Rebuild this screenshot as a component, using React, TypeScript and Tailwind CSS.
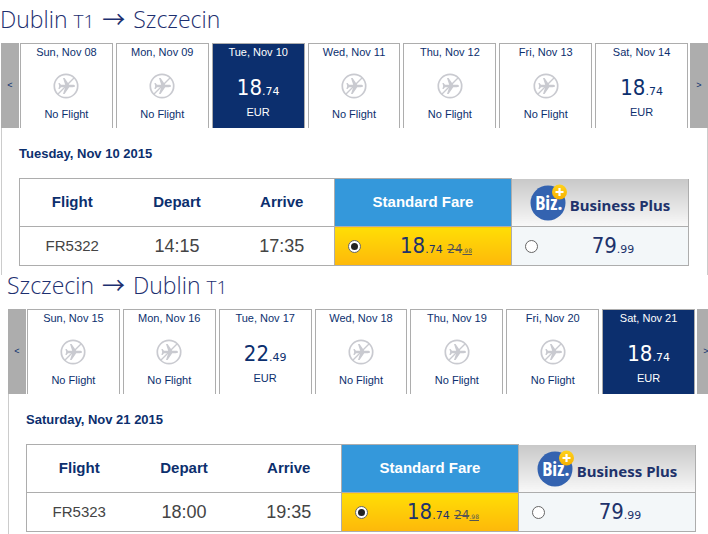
import React, { useState } from 'react'
import { clsx } from 'clsx'

interface Price {
  whole: string
  cents: string
}

interface Day {
  label: string
  price?: Price
}

interface Flight {
  id: string
  from: React.ReactNode
  to: React.ReactNode
  days: Day[]
  selected: number
  date: string
  number: string
  depart: string
  arrive: string
}

const terminal = <span className="text-[19px]">T1</span>

const outbound: Flight = {
  id: 'outbound',
  from: <>Dublin {terminal}</>,
  to: 'Szczecin',
  days: [
    { label: 'Sun, Nov 08' },
    { label: 'Mon, Nov 09' },
    { label: 'Tue, Nov 10', price: { whole: '18', cents: '74' } },
    { label: 'Wed, Nov 11' },
    { label: 'Thu, Nov 12' },
    { label: 'Fri, Nov 13' },
    { label: 'Sat, Nov 14', price: { whole: '18', cents: '74' } },
  ],
  selected: 2,
  date: 'Tuesday, Nov 10 2015',
  number: 'FR5322',
  depart: '14:15',
  arrive: '17:35',
}

const inbound: Flight = {
  id: 'inbound',
  from: 'Szczecin',
  to: <>Dublin {terminal}</>,
  days: [
    { label: 'Sun, Nov 15' },
    { label: 'Mon, Nov 16' },
    { label: 'Tue, Nov 17', price: { whole: '22', cents: '49' } },
    { label: 'Wed, Nov 18' },
    { label: 'Thu, Nov 19' },
    { label: 'Fri, Nov 20' },
    { label: 'Sat, Nov 21', price: { whole: '18', cents: '74' } },
  ],
  selected: 6,
  date: 'Saturday, Nov 21 2015',
  number: 'FR5323',
  depart: '18:00',
  arrive: '19:35',
}

function NoFlightIcon() {
  return (
    <svg viewBox="0 0 26 26" className="w-[26px] h-[26px]" aria-hidden="true">
      <circle cx="13" cy="13" r="11.7" fill="none" stroke="#c9cad0" strokeWidth="1.7" />
      <path d="M4.8 21.2 21.2 4.8" stroke="#c9cad0" strokeWidth="1.3" />
      <path
        d="M22 13c0-.8-1-1.2-2.2-1.2h-3.6L11.6 5H10l2.2 6.8H8L6.6 9.9H5.4l.8 3.1-.8 3.1h1.2L8 14.2h4.2L10 21h1.6l4.6-6.8h3.6c1.2 0 2.2-.4 2.2-1.2z"
        fill="#c9cad0"
      />
    </svg>
  )
}

function BizLogo() {
  return (
    <svg viewBox="0 0 38 38" className="w-[38px] h-[38px] shrink-0" aria-hidden="true">
      <defs>
        <linearGradient id="badge" x1="0" y1="0" x2="0" y2="1">
          <stop offset="0" stopColor="#ffd21c" />
          <stop offset="1" stopColor="#f7b100" />
        </linearGradient>
      </defs>
      <circle cx="18" cy="20" r="17.5" fill="#3463b0" />
      <text
        x="19"
        y="27"
        textAnchor="middle"
        fontFamily="'Open Sans Condensed', 'Roboto Condensed', 'Noto Sans Condensed', Roboto, sans-serif"
        fontSize="20"
        fontWeight="700"
        fill="#fff"
      >
        Biz.
      </text>
      <circle cx="29.5" cy="9" r="7.5" fill="url(#badge)" />
      <path d="M29.5 5v8M25.5 9h8" stroke="#fff" strokeWidth="2.2" />
    </svg>
  )
}

function Amount({ whole, cents }: Price) {
  return (
    <span className="font-['DejaVu_Sans_Condensed','DejaVu_Sans',sans-serif] text-[22px]">
      {whole}
      <span className="font-['DejaVu_Sans',sans-serif] text-[11px]">.{cents}</span>
    </span>
  )
}

function DayTab({
  day,
  active,
  onClick,
}: {
  day: Day
  active: boolean
  onClick: () => void
}) {
  return (
    <button
      onClick={onClick}
      className={clsx(
        'flex-1 flex flex-col items-center h-[85px] border border-b-0 border-[#adadad] text-[11px] leading-4',
        active ? 'bg-[#0c2f6e] text-white' : 'bg-white text-[#0c2f6e]'
      )}
    >
      <span>{day.label}</span>
      {day.price ? (
        <>
          <span className="mt-[18px] leading-5">
            <Amount {...day.price} />
          </span>
          <span className="mt-[2px]">EUR</span>
        </>
      ) : (
        <>
          <span className="mt-[13px]">
            <NoFlightIcon />
          </span>
          <span className="mt-[7px]">No Flight</span>
        </>
      )}
    </button>
  )
}

function FareRadio({
  name,
  label,
  checked,
  onChange,
  children,
}: {
  name: string
  label: string
  checked: boolean
  onChange: () => void
  children: React.ReactNode
}) {
  return (
    <label className="flex items-center pl-[13px] leading-6">
      <input
        type="radio"
        name={name}
        aria-label={label}
        checked={checked}
        onChange={onChange}
        className="appearance-none w-[13px] h-[13px] rounded-full border border-[#666] bg-white grid place-items-center checked:before:block checked:before:w-[7px] checked:before:h-[7px] checked:before:rounded-full checked:before:bg-[#222]"
      />
      <span className="flex-1 pt-1 text-center whitespace-nowrap">{children}</span>
    </label>
  )
}

function FlightSection({ flight, className }: { flight: Flight; className?: string }) {
  const [selected, setSelected] = useState(flight.selected)
  const [fare, setFare] = useState('standard')

  return (
    <section className={className}>
      <h2 className="h-[18px] font-['Open_Sans',sans-serif] font-light text-[23px] leading-[18px] text-[#1d2f6f] whitespace-nowrap">
        {flight.from}{' '}
        <span className="mx-[2px] font-['Noto_Sans_CJK_JP',sans-serif] font-normal">→</span>{' '}
        {flight.to}
      </h2>

      <div className="mt-4 ml-px flex">
        <button aria-label="Previous days" className="w-[18px] mr-px bg-[#adadad] text-[9px]">
          &lt;
        </button>
        <div className="flex-1 flex gap-[3px]">
          {flight.days.map((day, index) => (
            <DayTab
              key={day.label}
              day={day}
              active={index === selected}
              onClick={() => setSelected(index)}
            />
          ))}
        </div>
        <button aria-label="Next days" className="w-[18px] ml-[2px] bg-[#adadad] text-[9px]">
          &gt;
        </button>
      </div>

      <div className="ml-px pl-[17px] pr-[18px] pt-[17px] pb-[9px] border-x border-[#ccc]">
        <h3 className="text-[13px] leading-[18px] font-bold">{flight.date}</h3>
        <table className="mt-[15px] w-full table-fixed border-collapse text-center">
          <colgroup>
            <col className="w-[105px]" />
            <col className="w-[105px]" />
            <col className="w-[105px]" />
            <col />
            <col />
          </colgroup>
          <thead>
            <tr className="h-12 text-[15px]">
              <th className="border-y border-l border-[#adadad]">Flight</th>
              <th className="border-y border-[#adadad]">Depart</th>
              <th className="border-y border-[#adadad]">Arrive</th>
              <th className="border border-[#adadad] bg-[#3498db] text-white">Standard Fare</th>
              <th className="border border-t-0 border-[#adadad] bg-linear-to-b from-[#c8c8c8] to-[#f8f8f8]">
                <div className="flex items-center justify-center">
                  <BizLogo />
                  <span className="ml-[2px] mt-[6px] font-['Noto_Sans',sans-serif] text-[15px] text-[#20326b] whitespace-nowrap">
                    Business Plus
                  </span>
                </div>
              </th>
            </tr>
          </thead>
          <tbody>
            <tr className="h-[39px] text-[#444]">
              <td className="border-b border-l border-[#adadad] text-[15px]">{flight.number}</td>
              <td className="border-b border-[#adadad] text-[18px]">{flight.depart}</td>
              <td className="border-b border-[#adadad] text-[18px]">{flight.arrive}</td>
              <td className="border border-[#adadad] bg-linear-to-b from-[#ffde05] to-[#fdb80a] text-[#20326b]">
                <FareRadio
                  name={flight.id}
                  label="Standard Fare"
                  checked={fare === 'standard'}
                  onChange={() => setFare('standard')}
                >
                  <Amount whole="18" cents="74" />{' '}
                  <s className="font-['DejaVu_Sans',sans-serif] text-[12px] text-[#555]">
                    24<span className="text-[6px]">.98</span>
                  </s>
                </FareRadio>
              </td>
              <td className="border border-[#adadad] bg-[#f3f7f9] text-[#20326b]">
                <FareRadio
                  name={flight.id}
                  label="Business Plus"
                  checked={fare === 'business'}
                  onChange={() => setFare('business')}
                >
                  <Amount whole="79" cents="99" />
                </FareRadio>
              </td>
            </tr>
          </tbody>
        </table>
      </div>
    </section>
  )
}

export default function App() {
  return (
    <main className="overflow-hidden bg-white font-['Liberation_Sans',sans-serif] text-[#0c2f6e]">
      <FlightSection flight={outbound} className="pt-[9px]" />
      <FlightSection flight={inbound} className="ml-[7px] -mr-[7px]" />
    </main>
  )
}
